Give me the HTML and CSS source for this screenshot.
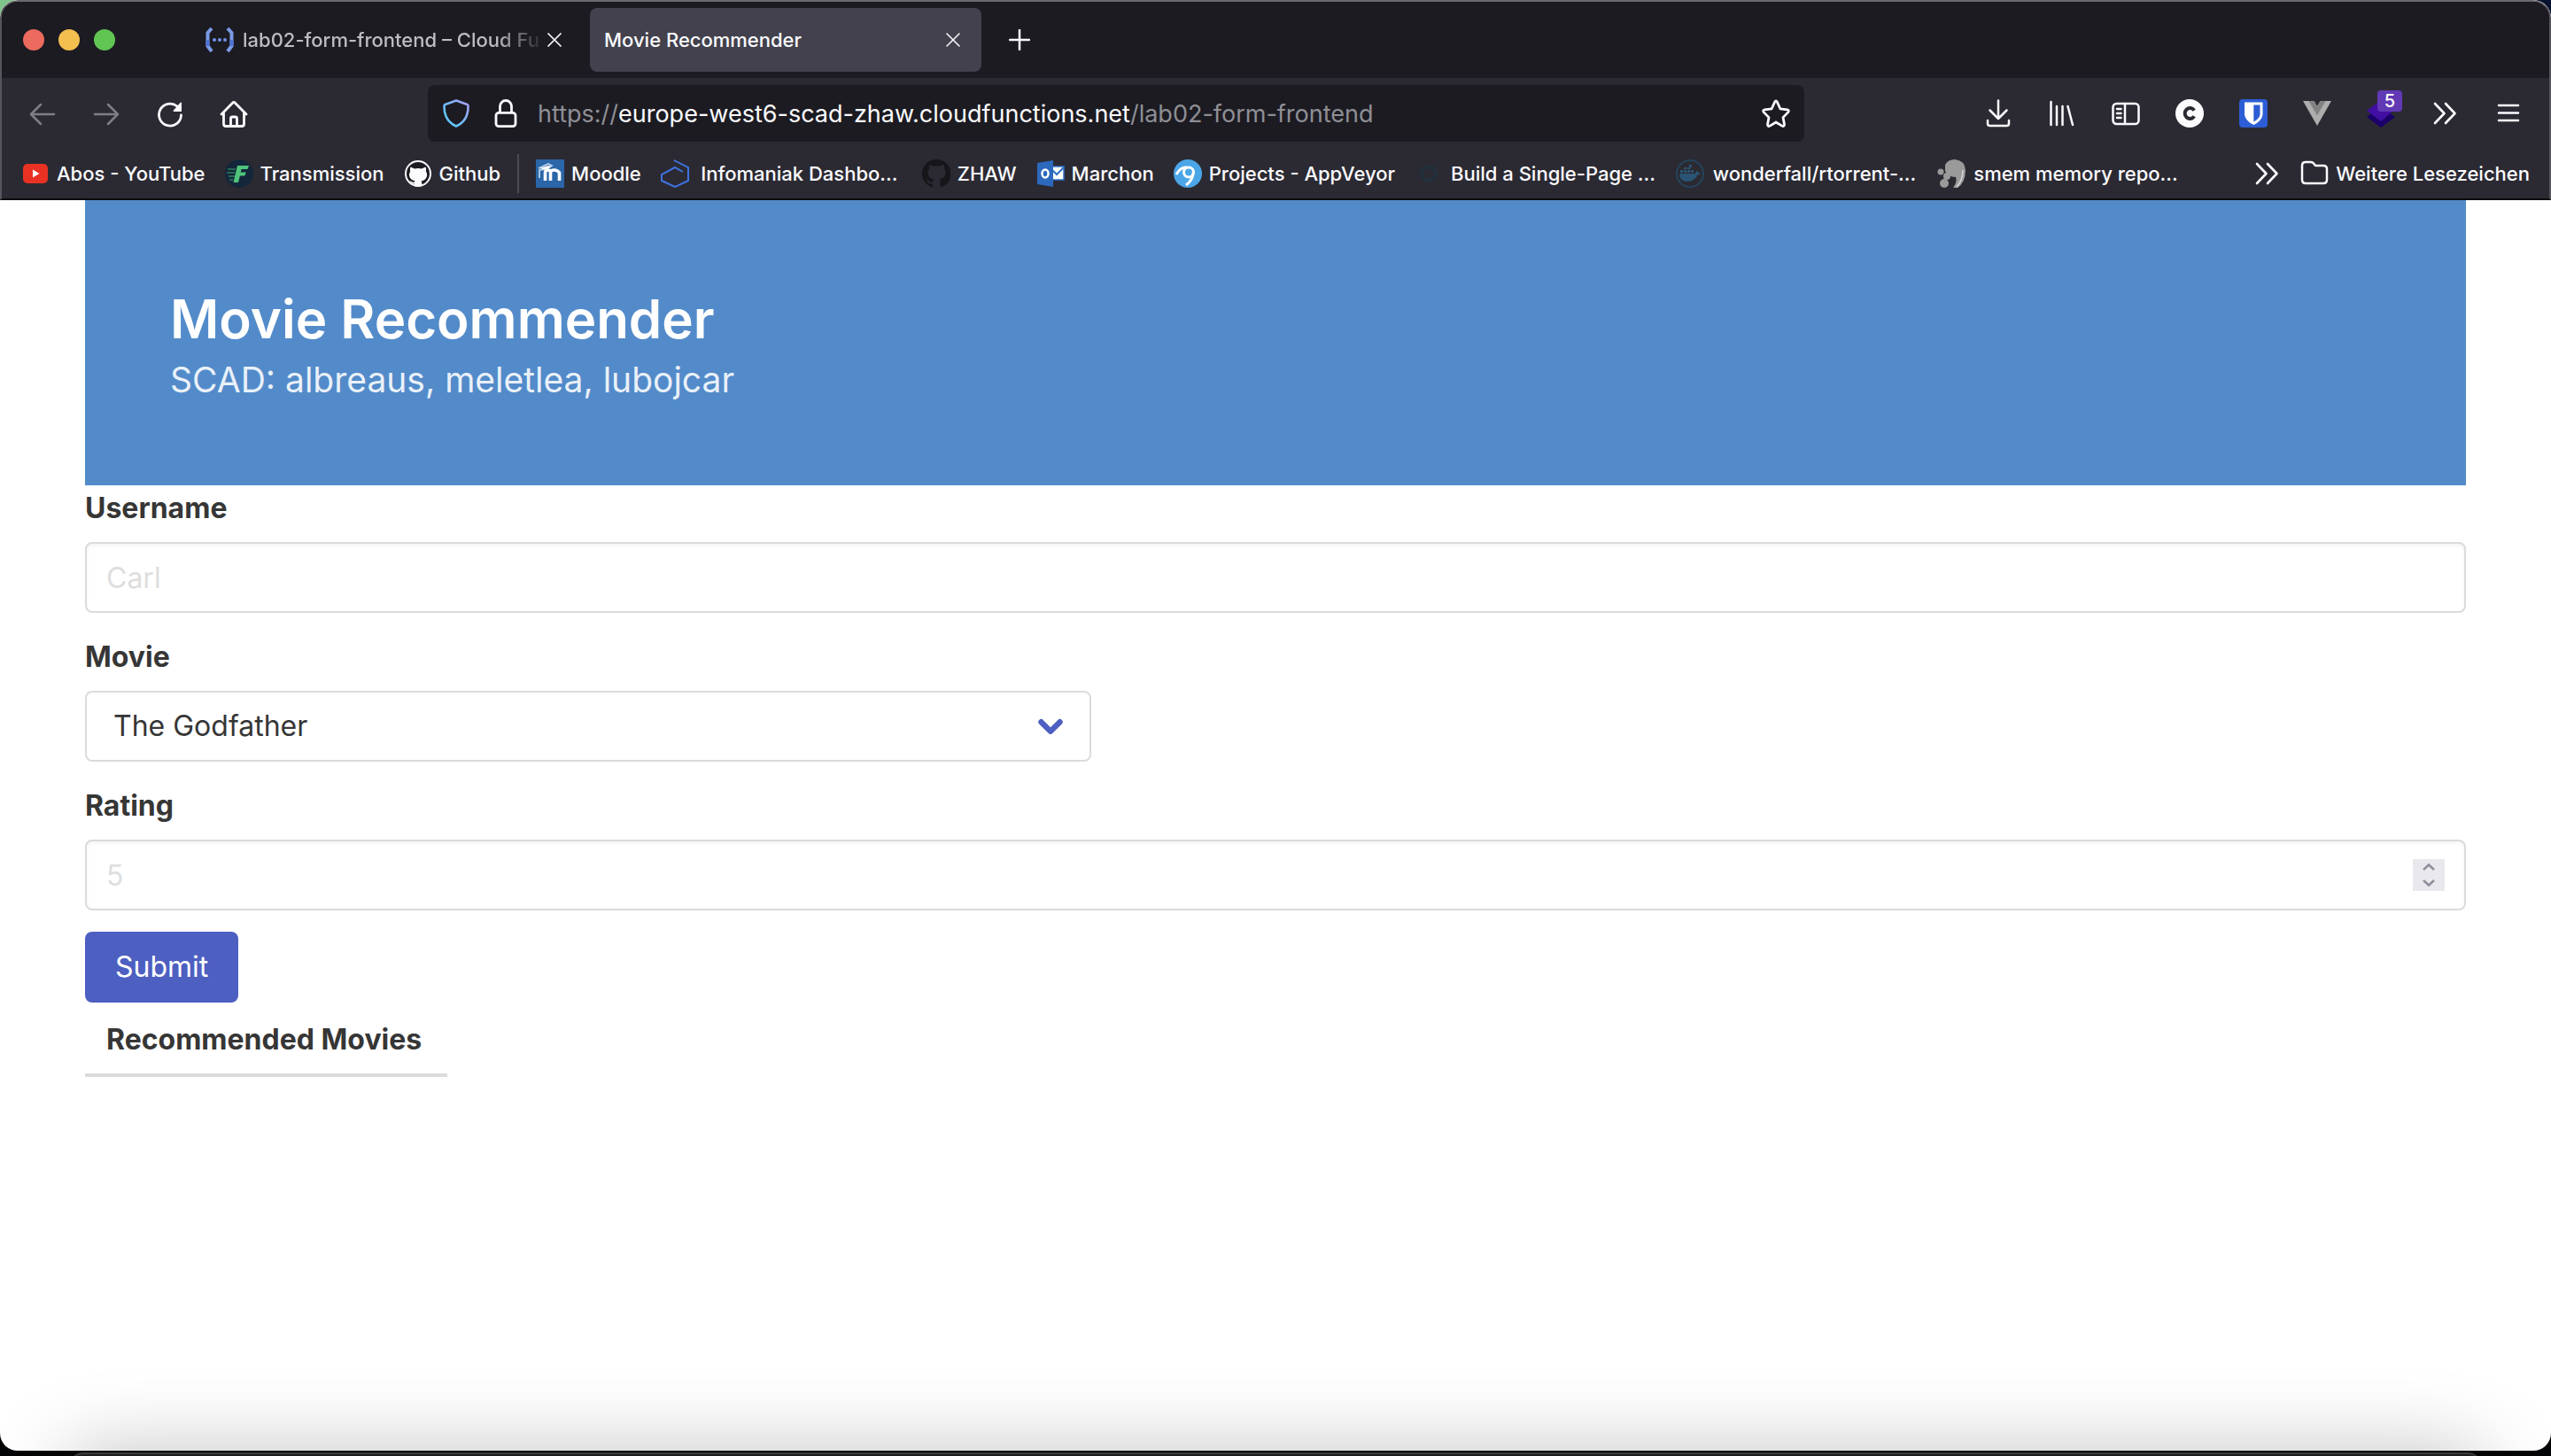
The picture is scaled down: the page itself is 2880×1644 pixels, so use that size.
FILE: index.html
```html
<!DOCTYPE html>
<html lang="de">
<head>
<meta charset="utf-8">
<meta name="viewport" content="width=device-width, initial-scale=1">
<title>Movie Recommender</title>
<link rel="stylesheet" href="styles.css">
</head>
<body>
<div class="desktop">
<div class="window">
  <header class="chrome">
    <div class="tabbar">
      <div class="lights">
        <button class="light light-close" aria-label="Close window"></button>
        <button class="light light-min" aria-label="Minimise window"></button>
        <button class="light light-max" aria-label="Zoom window"></button>
      </div>
      <div class="tabs">
        <div class="tab">
          <svg class="icon" viewBox="0 0 32 32" fill="none"><path d="M7 3 2.500 8v15L7 29" stroke="#7b9be6" stroke-width="4"/><path d="M25 3l4.500 5v15L25 29" stroke="#7b9be6" stroke-width="4"/><path d="M2.500 16v7M29.500 16v7" stroke="#4f74d2" stroke-width="4"/><g fill="#6f93e8"><circle cx="10" cy="16" r="2"/><circle cx="16" cy="16" r="2"/><circle cx="22" cy="16" r="2"/></g></svg>
          <span class="tab-title tab-title-fade">lab02-form-frontend – Cloud Fu</span>
          <button class="tab-close" aria-label="Close tab"><svg viewBox="0 0 16 16" fill="none" stroke="currentColor" stroke-width="1.700" stroke-linecap="round"><path d="M1 1l14 14M15 1 1 15"/></svg></button>
        </div>
        <div class="tab tab-active">
          <span class="tab-title">Movie Recommender</span>
          <button class="tab-close" aria-label="Close tab"><svg viewBox="0 0 16 16" fill="none" stroke="currentColor" stroke-width="1.500" stroke-linecap="round"><path d="M1 1l14 14M15 1 1 15"/></svg></button>
        </div>
      </div>
      <button class="new-tab" aria-label="New tab"><svg viewBox="0 0 24 24" fill="none" stroke="currentColor" stroke-width="2.500" stroke-linecap="round"><path d="M12 1v22M1 12h22"/></svg></button>
    </div>

    <div class="toolbar">
      <nav class="tools">
        <button class="tool tool-dim" aria-label="Back"><svg class="icon" viewBox="0 0 32 32" fill="none" stroke="currentColor" stroke-width="2.500" stroke-linecap="round" stroke-linejoin="round"><path d="M29 17H3M14 6 3 17l11 11"/></svg></button>
        <button class="tool tool-dim" aria-label="Forward"><svg class="icon" viewBox="0 0 32 32" fill="none" stroke="currentColor" stroke-width="2.500" stroke-linecap="round" stroke-linejoin="round"><path d="M3 17h26M18 6l11 11-11 11"/></svg></button>
        <button class="tool" aria-label="Reload"><svg class="icon" viewBox="0 0 32 32" fill="none"><path d="M28.500 18A12.500 12.500 0 1 1 24 8" stroke="currentColor" stroke-width="2.800" stroke-linecap="round"/><path d="M29 4.500v9.500h-8.500c-1 0-1.200-.8-.6-1.400l7.600-8.600c.7-.7 1.500-.4 1.500.5z" fill="currentColor"/></svg></button>
        <button class="tool" aria-label="Home"><svg class="icon" viewBox="0 0 32 32" fill="none" stroke="currentColor" stroke-width="2.800" stroke-linecap="round" stroke-linejoin="round"><path d="M2 17 14.600 4.200q1.400-1.400 2.800 0L30 17M4.500 15v13q0 2.500 2.500 2.500h18q2.500 0 2.500-2.500V15M12.500 30v-8q0-2 2-2h3q2 0 2 2v8"/></svg></button>
      </nav>
      <div class="urlbar">
        <svg class="icon" viewBox="0 0 32 32" fill="none"><defs><linearGradient id="shield" x1="0" y1="1" x2="1" y2="0"><stop offset=".3" stop-color="#63c4fb"/><stop offset="1" stop-color="#ab9df5"/></linearGradient></defs><path d="M16 1.500 28.500 6q1.200.5 1 2.500c0 10-4.500 18-13.500 22C7 26.500 2.500 18.500 2.500 8.500q-.2-2 1-2.500z" stroke="url(#shield)" stroke-width="2.600" stroke-linejoin="round"/></svg>
        <svg class="icon icon-lock" viewBox="0 0 32 32" fill="none" stroke="#fbfbfe" stroke-width="2.800"><rect x="5" y="15.400" width="22" height="15.200" rx="3"/><path d="M9.500 15V8a6.500 6.500 0 0 1 13 0v7"/></svg>
        <span class="url">https://<b>europe-west6-scad-zhaw.cloudfunctions.net</b>/lab02-form-frontend</span>
        <button class="star" aria-label="Bookmark this page"><svg class="icon" viewBox="0 0 32 32" fill="none" stroke="currentColor" stroke-width="2.800" stroke-linejoin="round"><path d="M14.700 3q1.300-2 2.600 0l3.500 7.800 8 1q2.500.7 1 2.800l-5.800 6 1.500 8c0 1.800-1 2.400-2.700 1.500L16 26l-6.800 4.100c-1.700.9-2.700.3-2.700-1.500l1.500-8-5.800-6q-1.500-2.100 1-2.800l8-1z"/></svg></button>
      </div>
      <div class="tools">
        <button class="tool" aria-label="Downloads"><svg class="icon" viewBox="0 0 32 32" fill="none" stroke="currentColor" stroke-width="2.500" stroke-linecap="round" stroke-linejoin="round"><path d="M16 1.500v20M6.500 12.500 16 22l9.500-9.500M4 24v3.500q0 2.500 2.500 2.500h19q2.500 0 2.500-2.500V24"/></svg></button>
        <button class="tool" aria-label="Library"><svg class="icon" viewBox="0 0 32 32" fill="none" stroke="currentColor" stroke-width="2.500" stroke-linecap="round"><path d="M3.500 3v26M10 8v21M16.500 8v21M22.500 8l5.500 21"/></svg></button>
        <button class="tool" aria-label="Sidebars"><svg class="icon" viewBox="0 0 32 32" fill="none" stroke="currentColor" stroke-width="2.500" stroke-linecap="round"><rect x="1.500" y="5" width="29" height="23" rx="4"/><path d="M15 5v23M6 11h4.500M6 16h4.500M6 21h4.500"/></svg></button>
        <button class="tool" aria-label="Cookie extension"><svg class="icon" viewBox="0 0 32 32"><circle cx="16" cy="16" r="16" fill="#fbfbfe"/><path d="M21.200 12.800A5.700 6 0 1 0 21.200 19.200" fill="none" stroke="#2b2a33" stroke-width="4"/></svg></button>
        <button class="tool" aria-label="Bitwarden"><svg class="icon" viewBox="0 0 32 32"><rect width="32" height="32" rx="4" fill="#2c5dd4"/><path d="M6 3.500h20.500v14q-1 7-10.200 11.500Q7 24.500 6 17.500z" fill="#fff"/><path d="M16.300 6.500H23.500v11q-.8 4.500-7.200 8z" fill="#2c5dd4"/></svg></button>
        <button class="tool" aria-label="Vue devtools"><svg class="icon" viewBox="0 0 32 32"><path d="M0 2h12.500L16 8l3.500-6H32L16 30z" fill="#adadad"/><path d="M6.500 2h6L16 8l3.500-6h6L16 18.500z" fill="#828282"/></svg></button>
        <button class="tool" aria-label="Container extension, 5"><svg class="icon" viewBox="0 0 32 32"><path d="M16 9 32 20 16 32 0 20z" fill="#1b0069"/><path d="M16 1 30 13 16 25 0 13z" fill="#420fa3"/></svg><span class="badge">5</span></button>
        <button class="tool" aria-label="More tools"><svg class="icon" viewBox="0 0 32 32" fill="none" stroke="currentColor" stroke-width="2.600" stroke-linecap="round" stroke-linejoin="round"><path d="M5 5l10.500 11L5 27M17 5l10.500 11L17 27"/></svg></button>
        <button class="tool" aria-label="Menu"><svg class="icon" viewBox="0 0 32 32" fill="none" stroke="currentColor" stroke-width="2.500" stroke-linecap="round"><path d="M5 7h22M5 15.500h22M5 24h22"/></svg></button>
      </div>
    </div>

    <nav class="bookmarks">
      <a class="bookmark" href="#"><svg class="icon" viewBox="0 0 32 32"><rect x="2" y="5" width="28" height="22" rx="5" fill="#e93223"/><path d="M13 11.500v9l7.500-4.500z" fill="#fff"/></svg><span>Abos - YouTube</span></a>
      <a class="bookmark" href="#"><svg class="icon" viewBox="0 0 32 32"><circle cx="16" cy="16" r="16" fill="#14263a"/><path d="M14 7h13l-1.500 4h-7l-.8 3.500h6l-1.300 4h-5.500L15 26H9.500z" fill="#4fc47a"/><path d="M3 11h9M2 15h9M4 19h7M5 23h4" stroke="#2c7d5a" stroke-width="1.500"/></svg><span>Transmission</span></a>
      <a class="bookmark" href="#"><svg class="icon" viewBox="0 0 32 32"><circle cx="16" cy="16" r="14" fill="#1c1b22" stroke="#fbfbfe" stroke-width="2"/><path d="M7.500 8.500 12 10.500q4-1 8 0l4.500-2q1.200 3 .4 5 2.100 3 .6 6.800-1.500 3.400-6 4.200.8 1 .8 3v2.800q-4.300 1.200-8.500 0v-2.700c-4 .6-4-2.800-5.800-3.600 2.300-.4 2.600 2.500 5.800 1.500l.7-1.200q-4.500-.8-6-4.200-1.300-3.800.6-6.600-.8-2 .4-5z" fill="#fbfbfe"/></svg><span>Github</span></a>
      <span class="separator"></span>
      <a class="bookmark" href="#"><svg class="icon" viewBox="0 0 32 32"><path d="M0 0h32v32H0z" fill="#2a66a8"/><path d="M10.500 24V15q0-3 3-3t3 3v9m0-9q0-3 4-3t6 3v9" fill="none" stroke="#fff" stroke-width="3.600"/><path d="M3 10 14 5l4 2-6 4-8 1v9" fill="none" stroke="#b8d0ea" stroke-width="1.800"/><path d="M4 10l10-3 3 1-5 4z" fill="#fff"/></svg><span>Moodle</span></a>
      <a class="bookmark bookmark-long" href="#"><svg class="icon" viewBox="0 0 32 32" fill="none" stroke="#3f72e0" stroke-width="2"><path d="M15 1l16 8v15l-15 7-15-7V17L16 9l9 5"/></svg><span>Infomaniak Dashbo...</span></a>
      <a class="bookmark" href="#"><svg class="icon" viewBox="0 0 32 32"><path d="M16 0a16 16 0 0 0-5 31.200q1 .1 1-.8v-3c-5 1-5.500-2-6.500-3.500l-1.500-1.400c3-.8 3.500 3 6 3 1.200 0 2-.3 2.300-1 .2-1 .6-1.700 1.200-2.200-3.700-.4-7-2-7-7.700q0-2.500 1.600-4.300-.7-2 .3-4.300c1.500 0 3 .8 4.500 1.800q3.600-1 7.200 0c1.500-1 3-1.800 4.500-1.800q1 2.300.3 4.300 1.600 1.800 1.600 4.300c0 5.700-3.500 7.300-7.200 7.700q1.500 1.300 1.300 4v4.100q0 .9 1 .8A16 16 0 0 0 16 0z" fill="#161519"/></svg><span>ZHAW</span></a>
      <a class="bookmark" href="#"><svg class="icon" viewBox="0 0 32 32"><path d="M17 8h14v15H17z" fill="#fff" stroke="#2f6fc8" stroke-width="1.500"/><path d="M18 12l5 5 8-8" fill="none" stroke="#2f6fc8" stroke-width="2"/><path d="M1 4 19 1v30L1 28z" fill="#2c69bd"/><ellipse cx="10" cy="16" rx="3.500" ry="4.500" fill="none" stroke="#fff" stroke-width="2.500"/></svg><span>Marchon</span></a>
      <a class="bookmark" href="#"><svg class="icon" viewBox="0 0 32 32"><circle cx="16" cy="16" r="16" fill="#4ba6e8"/><g fill="none" stroke="#fff" stroke-width="3"><circle cx="17" cy="14.500" r="5.500"/><path d="M3 17Q8 8 15 9M22 15q0 8-8 14"/></g></svg><span>Projects - AppVeyor</span></a>
      <a class="bookmark bookmark-long" href="#"><svg class="icon" viewBox="0 0 32 32" fill="none" stroke="#21303b"><circle cx="16" cy="16" r="8" stroke-width="4"/><path d="M3 5v22M29 5v22" stroke-width="1" stroke-dasharray="3 5"/></svg><span>Build a Single-Page ...</span></a>
      <a class="bookmark bookmark-long" href="#"><svg class="icon" viewBox="0 0 32 32"><circle cx="16" cy="16" r="15" fill="none" stroke="#25445b" stroke-width="2"/><path d="M4 16h18q1-3 2-3 1 1 1 2 2 0 3 .5-1 2-4 2.500-3 7-11 7-9 0-9-9zM5 12h3v3H5zM9 12h3v3H9zM13 12h3v3h-3zM17 12h3v3h-3zM9 9h3v2H9zM13 9h3v2h-3zM15 6h3v3h-3z" fill="#2a5473"/></svg><span>wonderfall/rtorrent-...</span></a>
      <a class="bookmark bookmark-long" href="#"><svg class="icon" viewBox="0 0 32 32" fill="#9a9a9a"><path d="M9 6Q12 0 20 0q11 1 12 12 0 14-9 20h-5q5-7 3-12-9 0-12-7z"/><path d="M29 12q0 12-7 19" fill="none" stroke="#d8d8d8" stroke-width="1.500"/><circle cx="4" cy="14" r="3.500"/><circle cx="11" cy="19" r="4"/><circle cx="8" cy="27" r="5"/></svg><span>smem memory repo...</span></a>
      <span class="fill"></span>
      <button class="more" aria-label="More bookmarks"><svg class="icon" viewBox="0 0 32 32" fill="none" stroke="currentColor" stroke-width="2.600" stroke-linecap="round" stroke-linejoin="round"><path d="M5 5l10.500 11L5 27M17 5l10.500 11L17 27"/></svg></button>
      <a class="bookmark" href="#"><svg class="icon" viewBox="0 0 32 32" fill="none" stroke="#fbfbfe" stroke-width="2.500" stroke-linejoin="round"><path d="M2 7q0-4 4-4h6q2 0 3 1.500L17 7h9q4 0 4 4v12q0 4-4 4H6q-4 0-4-4z"/></svg><span>Weitere Lesezeichen</span></a>
    </nav>
  </header>

  <main class="page">
    <section class="hero">
      <h1 class="title">Movie Recommender</h1>
      <p class="subtitle">SCAD: albreaus, meletlea, lubojcar</p>
    </section>
    <form>
      <div class="field">
        <label class="label" for="username">Username</label>
        <input class="input" id="username" type="text" placeholder="Carl">
      </div>
      <div class="field">
        <label class="label" for="movie">Movie</label>
        <div class="select">
          <select id="movie"><option>The Godfather</option></select>
          <svg class="chevron" viewBox="0 0 26 18" fill="none" stroke="currentColor" stroke-width="6" stroke-linecap="round" stroke-linejoin="round"><path d="M3 4l10 10L23 4"/></svg>
        </div>
      </div>
      <div class="field">
        <label class="label" for="rating">Rating</label>
        <div class="number">
          <input class="input" id="rating" type="number" placeholder="5">
          <div class="spinner">
            <button type="button" aria-label="Increase"><svg viewBox="0 0 14 8" fill="none" stroke="currentColor" stroke-width="2.600"><path d="M1 7l6-5.500L13 7"/></svg></button>
            <button type="button" aria-label="Decrease"><svg viewBox="0 0 14 8" fill="none" stroke="currentColor" stroke-width="2.600"><path d="M1 1l6 5.500L13 1"/></svg></button>
          </div>
        </div>
      </div>
      <button class="submit" type="submit">Submit</button>
    </form>
    <table class="table">
      <thead><tr><th>Recommended Movies</th></tr></thead>
    </table>
  </main>
</div>
<div class="dock"></div>
</div>
</body>
</html>
```
FILE: styles.css
```css
*, *::before, *::after { box-sizing: border-box; }

body {
  margin: 0;
  font-family: Inter, "Liberation Sans", sans-serif;
  color: #363636;
}

button {
  margin: 0;
  padding: 0;
  border: 0;
  background: none;
  color: inherit;
  font: inherit;
}

svg { display: block; flex: none; }
.icon { width: 32px; height: 32px; }

/* Desktop and window frame */
.desktop {
  display: flex;
  flex-direction: column;
  min-height: 100vh;
  overflow: hidden;
  background: linear-gradient(to right, #7fc48b 0, #7fc48b 20px, #06122e 20px) top / 100% 20px no-repeat, #030506;
}

.window {
  flex: 1;
  display: flex;
  flex-direction: column;
  overflow: hidden;
  border-radius: 20px;
  background: #fff;
}

/* The dock reaches below the visible screen; only its top edge shows */
.dock {
  height: 124px;
  margin: 2px 78px -120px;
  border-top: 2px solid #3a3b3d;
  border-radius: 16px 16px 0 0;
  background: #1c1e20;
  box-shadow: 0 0 90px rgba(0, 0, 0, 0.25);
}

/* Browser chrome */
.chrome {
  border: 2px solid #56555c;
  border-top-color: #6b6b6f;
  border-bottom-color: #0c0c0d;
  border-radius: 20px 20px 0 0;
  background: #2b2a33;
  color: #fbfbfe;
  font-size: 22px;
  font-weight: 500;
}

.tabbar {
  display: flex;
  align-items: center;
  height: 86px;
  padding: 0 24px;
  border-radius: 18px 18px 0 0;
  background: #1c1b22;
}

.lights { display: flex; gap: 16px; width: 190px; }
.light { width: 24px; height: 24px; border-radius: 50%; }
.light-close { background: #ec6a5e; }
.light-min { background: #f4bf4f; }
.light-max { background: #61c554; }

.tabs { display: flex; gap: 8px; }

.tab {
  display: flex;
  align-items: center;
  gap: 10px;
  width: 442px;
  height: 72px;
  padding: 0 24px 0 16px;
  border-radius: 8px;
}

.tab-active { background: #42414d; }
.tab-title { flex: 1; white-space: nowrap; }

.tab-title-fade {
  margin-right: -8px;
  color: #bdbdc0;
  mask-image: linear-gradient(to left, transparent 0, #000 56px);
}

.tab-close svg { width: 16px; height: 16px; }
.new-tab { margin-left: 31px; }
.new-tab svg { width: 24px; height: 24px; }

.toolbar {
  display: flex;
  align-items: center;
  height: 80px;
  padding: 0 10px;
}

.tools { display: flex; }
.tool { position: relative; display: grid; place-items: center; width: 72px; height: 64px; }
.tool-dim { color: #7f7e85; }

.badge {
  position: absolute;
  top: 6px;
  left: 32px;
  width: 28px;
  border-radius: 4px;
  background: #6239b5;
  font-size: 20px;
  line-height: 24px;
}

.urlbar {
  flex: 1;
  display: flex;
  align-items: center;
  height: 64px;
  margin: 0 183px;
  padding: 0 16px;
  border-radius: 8px;
  background: #1c1b22;
}

.icon-lock { margin-left: 24px; }
.url { flex: 1; margin-left: 20px; color: #8f8f95; font-size: 27px; font-weight: 400; white-space: nowrap; }
.url b { color: #fbfbfe; font-weight: 400; }

.bookmarks {
  display: flex;
  align-items: center;
  height: 56px;
  padding: 0 11px;
}

.bookmark {
  display: flex;
  align-items: center;
  gap: 8px;
  padding: 0 11px;
  color: inherit;
  text-decoration: none;
  white-space: nowrap;
}

.bookmark-long span { width: 233px; text-align: center; }
.separator { width: 2px; height: 44px; margin: 0 8px; background: #4c4b55; }
.fill { flex: 1; }
.more { padding: 0 11px; }

/* Page */
.page { padding: 0 96px; font-size: 32px; line-height: 48px; }

.hero { padding: 98px 96px 94px; background: #538bca; color: #fff; }
.title { margin: 0 0 8px; font-size: 60px; font-weight: 600; line-height: 72px; }
.subtitle { margin: 0; color: rgba(255, 255, 255, 0.9); font-size: 39px; line-height: 50px; }

.field { margin-bottom: 24px; }
.label { display: block; padding-top: 2px; margin-bottom: 14px; font-weight: 700; }

.input, .select select {
  display: block;
  width: 100%;
  height: 80px;
  padding: 0 22px;
  border: 2px solid #dbdbdb;
  border-radius: 8px;
  background: #fff;
  color: #363636;
  font: inherit;
}

.input { box-shadow: inset 0 2px 4px rgba(10, 10, 10, 0.05); appearance: textfield; }
.input::placeholder { color: #dedede; opacity: 1; }
.input::-webkit-inner-spin-button { appearance: none; margin: 0; }

.select { position: relative; max-width: 1136px; }
.select select { padding: 0 80px 0 30px; appearance: none; }
.chevron { position: absolute; top: 31px; right: 32px; width: 28px; height: 19px; color: #4d5fc1; }

.number { position: relative; }
.spinner {
  position: absolute;
  top: 22px;
  right: 24px;
  display: grid;
  width: 36px;
  height: 36px;
  background: #e9e8ed;
  color: #8f8f9d;
}
.spinner button { display: grid; place-items: center; }
.spinner svg { width: 14px; height: 8px; }

.submit {
  display: block;
  height: 80px;
  padding: 0 34px;
  border-radius: 8px;
  background: #4d5fc1;
  color: #fff;
}

.table { border-collapse: collapse; }
.table th { min-width: 409px; padding: 18px 24px 14px; border-bottom: 4px solid #dbdbdb; font-weight: 700; text-align: left; }
```
